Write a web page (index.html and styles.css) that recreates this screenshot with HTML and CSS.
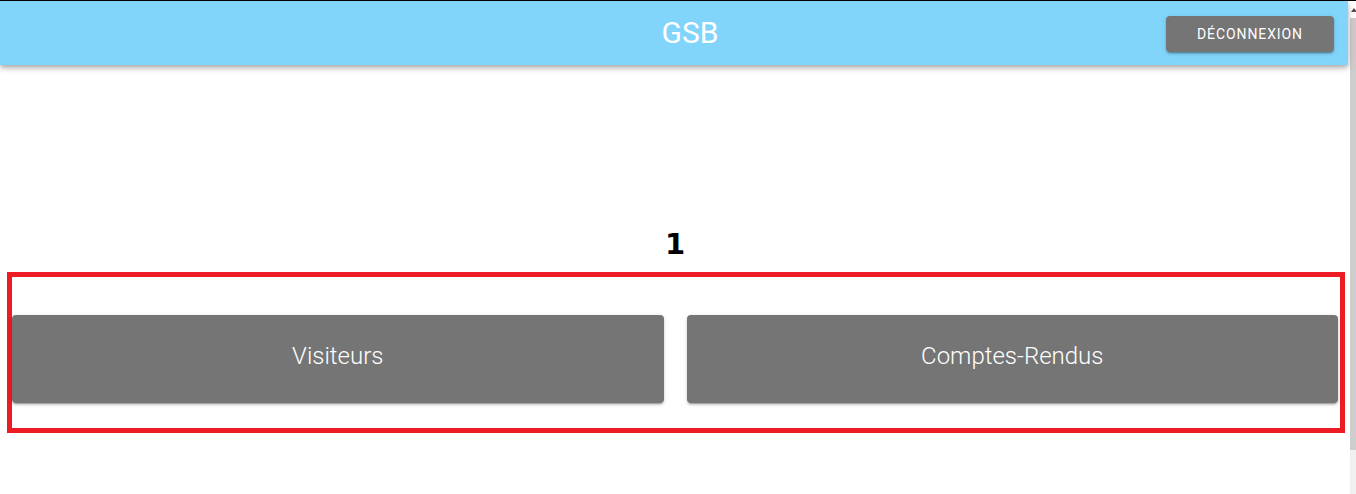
FILE: index.html
```html
<!DOCTYPE html>
<html lang="fr">
<head>
<meta charset="utf-8">
<title>GSB</title>
<link rel="stylesheet" href="styles.css">
</head>
<body>
<div class="window">
  <div class="page">
    <header class="appbar">
      <div></div>
      <h1 class="title">GSB</h1>
      <div class="actions"><button class="btn-logout">Déconnexion</button></div>
    </header>
    <main class="content">
      <h2 class="count">1</h2>
      <section class="highlight">
        <div class="menu">
          <button class="menu-btn">Visiteurs</button>
          <button class="menu-btn">Comptes-Rendus</button>
        </div>
      </section>
    </main>
  </div>
  <div class="scrollbar">
    <div class="sb-arrow"></div>
    <div class="sb-thumb"></div>
    <div class="sb-track"></div>
  </div>
</div>
</body>
</html>
```

FILE: styles.css
```css
html, body {
  margin: 0;
  padding: 0;
  background: #ffffff;
  overflow: hidden;
}

body {
  font-family: Roboto, "Liberation Sans", sans-serif;
}

.window {
  display: flex;
  height: 493px;
  border-top: 1px solid #000;
}

.page {
  flex: 1;
  display: flex;
  flex-direction: column;
}

.appbar {
  height: 64px;
  margin-right: 2px;
  background: #81d4fa;
  box-shadow: 0 2px 4px -1px rgba(0,0,0,0.2), 0 4px 5px 0 rgba(0,0,0,0.14), 0 1px 10px 0 rgba(0,0,0,0.12);
  display: grid;
  grid-template-columns: 1fr auto 1fr;
  align-items: center;
  padding-right: 14px;
  position: relative;
  z-index: 1;
}

.title {
  margin: 0;
  padding-left: 46px;
  color: #fff;
  font-size: 30px;
  font-weight: 400;
  line-height: 1;
}

.actions {
  display: flex;
  justify-content: flex-end;
  padding-top: 2px;
}

.btn-logout {
  height: 36px;
  width: 168px;
  border: none;
  border-radius: 4px;
  background: #757575;
  color: #fff;
  font-family: Roboto, "Liberation Sans", sans-serif;
  font-size: 14px;
  font-weight: 400;
  letter-spacing: 0.9px;
  text-transform: uppercase;
  box-shadow: 0 3px 1px -2px rgba(0,0,0,0.2), 0 2px 2px 0 rgba(0,0,0,0.14), 0 1px 5px 0 rgba(0,0,0,0.12);
  padding: 0;
}

.content {
  padding-top: 161px;
}

.count {
  margin: 0 0 10px;
  text-align: center;
  font-family: "DejaVu Sans", sans-serif;
  font-weight: 700;
  font-size: 29px;
  line-height: 36px;
  color: #000;
}

.highlight {
  margin-left: 7px;
  width: 1326px;
  border: 5px solid #ed1c24;
  padding: 38px 2px 25px 0;
}

.menu {
  display: grid;
  grid-template-columns: 1fr 1fr;
  gap: 23px;
}

.menu-btn {
  height: 88px;
  border: none;
  border-radius: 4px;
  background: #757575;
  color: #fff;
  font-family: Roboto, "Liberation Sans", sans-serif;
  font-size: 24px;
  font-weight: 300;
  box-shadow: 0 3px 1px -2px rgba(0,0,0,0.2), 0 2px 2px 0 rgba(0,0,0,0.14), 0 1px 5px 0 rgba(0,0,0,0.12);
  padding: 0 0 6px;
}

.scrollbar {
  width: 6px;
  display: flex;
  flex-direction: column;
}

.sb-arrow {
  height: 17px;
  background: #fff;
  position: relative;
}

.sb-arrow::after {
  content: "";
  position: absolute;
  left: 1px;
  top: 7px;
  border-left: 3px solid transparent;
  border-right: 3px solid transparent;
  border-bottom: 4px solid #505050;
}

.sb-thumb {
  height: 432px;
  background: #cdcdcd;
}

.sb-track {
  flex: 1;
  background: #f0f0f0;
}
```
